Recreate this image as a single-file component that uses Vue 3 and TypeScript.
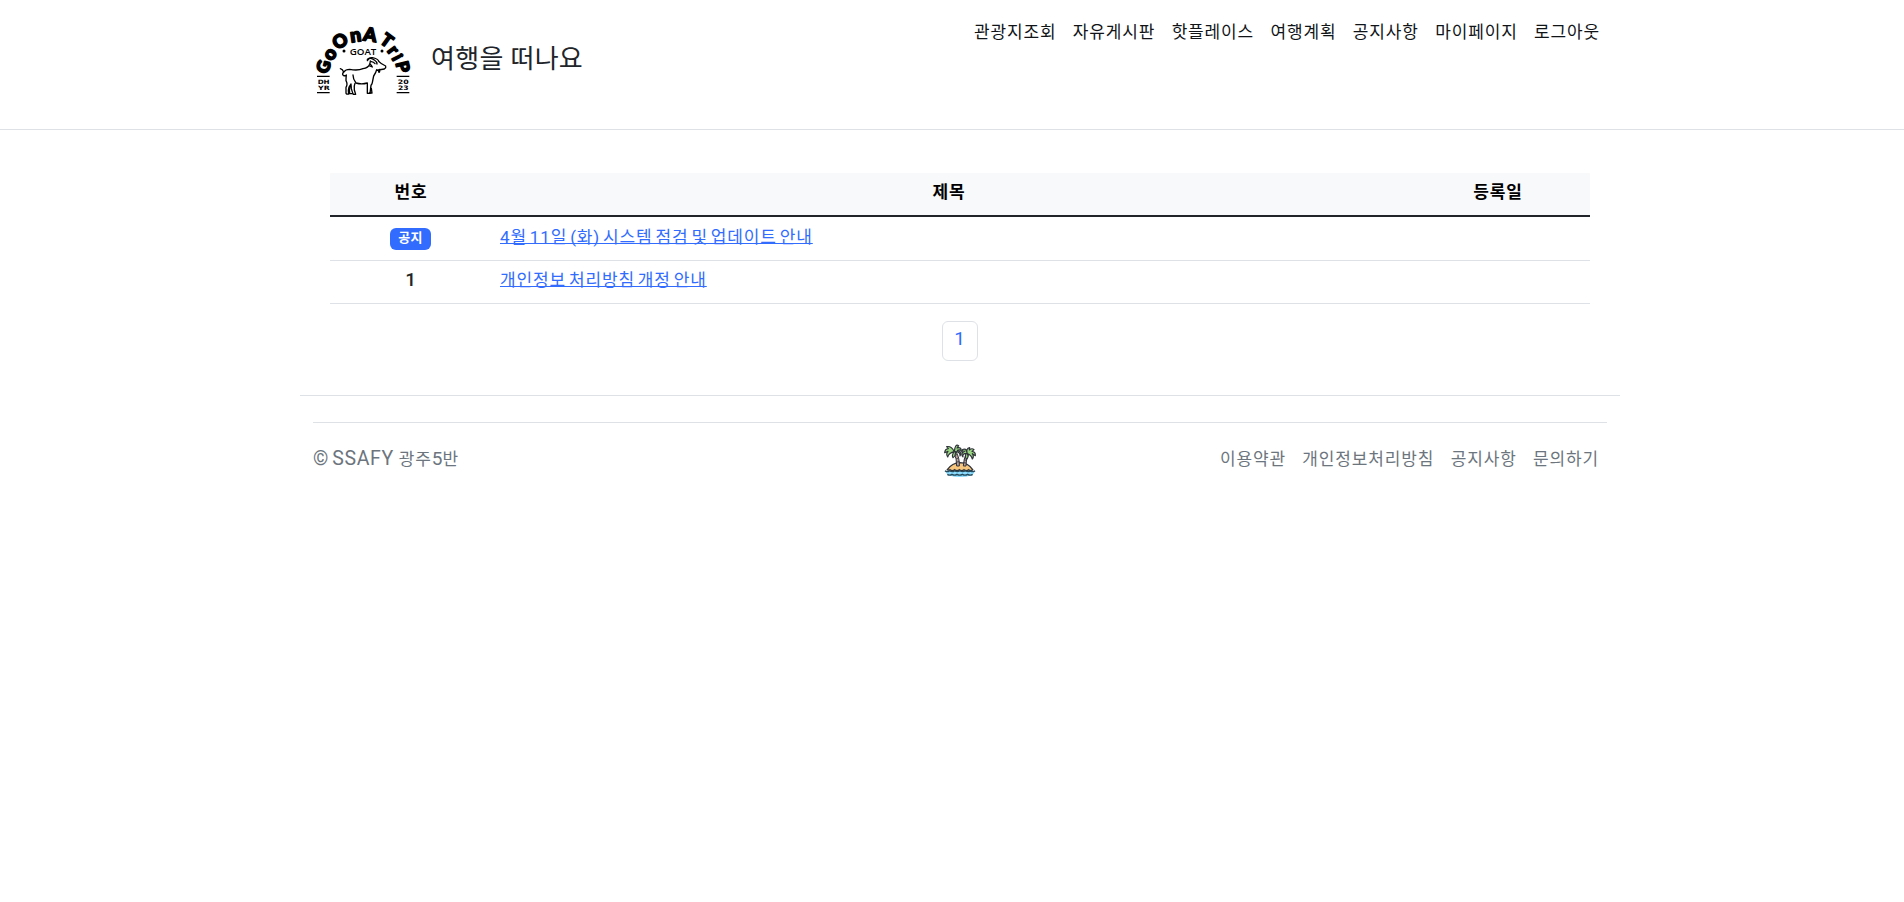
<script setup lang="ts">
interface Letter { ch: string; x: number; y: number; r: number; s: number }
interface Notice { id: number; label: string; pinned: boolean; title: string; date: string }

const menu: string[] = ['관광지조회', '자유게시판', '핫플레이스', '여행계획', '공지사항', '마이페이지', '로그아웃']
const footerLinks: string[] = ['이용약관', '개인정보처리방침', '공지사항', '문의하기']
const notices: Notice[] = [
  { id: 2, label: '공지', pinned: true, title: '4월 11일 (화) 시스템 점검 및 업데이트 안내', date: '' },
  { id: 1, label: '1', pinned: false, title: '개인정보 처리방침 개정 안내', date: '' },
]
const letters: Letter[] = [
  { ch: 'G', x: 72, y: 155, r: -76, s: 52 },
  { ch: 'o', x: 93, y: 119, r: -54, s: 56 },
  { ch: 'O', x: 121, y: 80, r: -32, s: 54 },
  { ch: 'n', x: 167, y: 66, r: -8, s: 58 },
  { ch: 'A', x: 210, y: 62, r: 8, s: 56 },
  { ch: 'T', x: 260, y: 77, r: 36, s: 52 },
  { ch: 'r', x: 277, y: 107, r: 52, s: 52 },
  { ch: 'i', x: 292, y: 127, r: 62, s: 46 },
  { ch: 'P', x: 307, y: 156, r: 76, s: 52 },
]
</script>

<template>
  <div class="page">
    <header class="header">
      <div class="header-inner">
        <a class="brand">
          <svg class="logo" viewBox="45 30 291 216" aria-label="GoOnATrip">
            <g class="arc">
              <text
                v-for="(l, i) in letters"
                :key="i"
                :transform="`translate(${l.x} ${l.y}) rotate(${l.r})`"
                :font-size="l.s"
                text-anchor="middle"
                :y="l.ch === 'n' || l.ch === 'o' || l.ch === 'r' ? 14 : 17"
              >{{ l.ch }}</text>
            </g>
            <text class="goat" x="189" y="119" text-anchor="middle" textLength="80" lengthAdjust="spacingAndGlyphs">GOAT</text>
            <circle cx="132" cy="108" r="4.5" />
            <circle cx="246" cy="108" r="4.5" />
            <g class="rule">
              <path d="M51 184H89M51 233H89M290 184H328M290 233H328" />
            </g>
            <g class="side">
              <text x="53" y="206" textLength="36" lengthAdjust="spacingAndGlyphs">DH</text>
              <text x="54" y="225" textLength="35" lengthAdjust="spacingAndGlyphs">YR</text>
              <text x="293" y="206" textLength="33" lengthAdjust="spacingAndGlyphs">20</text>
              <text x="294" y="225" textLength="32" lengthAdjust="spacingAndGlyphs">23</text>
            </g>
            <g class="goat-line">
              <path d="M121 161q7 2 10 10q6-8 18-8q24 5 40-2q16-2 20-13q2-6 2-10" />
              <path d="M131 171q-6 7-1 10q5 3 9-1q-1 8-1 17q6 11 0 20v18q0 3 8 2l-1-10q1-12 8-20l1 14q4 14 6 17h7l-4-13q-2-11 2-20" />
              <path d="M159 180q0 13 9 24q17 5 34 0v31h8l3-24q3-3 4-8q2-11 4-20q7-10 9-19q6 1 7 8q3-2 2-9" />
              <path d="M214 220l2 14h-8M151 214q-4 9-2 22h8" />
              <path d="M202 137q4-10 15-9q17 3 20 12q6 7 20 13q2 5-4 9q-9 2-18 3" />
              <path d="M202 133q11-7 21 2q8 5 8 12M214 140q7 1 11 6M211 148q3 3 6 8l-8-3" />
            </g>
          </svg>
          <span class="brand-name">여행을 떠나요</span>
        </a>
        <nav class="menu">
          <a v-for="m in menu" :key="m">{{ m }}</a>
        </nav>
      </div>
    </header>

    <main class="main">
      <table class="board">
        <colgroup>
          <col class="col-no" />
          <col />
          <col class="col-date" />
        </colgroup>
        <thead>
          <tr><th>번호</th><th>제목</th><th>등록일</th></tr>
        </thead>
        <tbody>
          <tr v-for="n in notices" :key="n.id">
            <td class="no">
              <span v-if="n.pinned" class="badge">{{ n.label }}</span>
              <template v-else>{{ n.label }}</template>
            </td>
            <td><a class="link">{{ n.title }}</a></td>
            <td>{{ n.date }}</td>
          </tr>
        </tbody>
      </table>
      <div class="pagination"><a class="page-link">1</a></div>
    </main>

    <div class="footer-wrap">
      <footer class="footer">
        <p class="copy"><span class="latin">© SSAFY</span> 광주<span class="digit">5</span>반</p>
        <svg class="island" viewBox="0 0 96 102">
          <path class="sea" d="M3 80q7 6 14 0q8 6 15 0q8 6 16 0q8 6 16 0q8 6 15 0q7 6 14 0q-4 19-45 19Q9 99 3 80Z" />
          <path class="sand" d="M10 77Q24 57 48 56q25 1 38 21q-6 6-12 0q-7 6-14 0q-7 6-14 0q-7 6-14 0q-7 6-14 0q-4 3-8 0Z" />
          <path class="trunk" d="M29 25l7-2q11 18 10 43h-8q1-22-9-41ZM67 28l7 3q-9 16-8 35h-8q1-22 9-38Z" />
          <path class="ring" d="M33 34l7-3M37 44l7-2M38 54l8-1M64 37l7 3M60 47l7 2M58 56l8 1" />
          <path class="leaf" d="M31 23Q22 5 8 8l5 6Q3 15 2 26l10-4Q5 29 11 39q4-13 20-16Q22 32 27 41q9-5 7-18q15 0 14 13q8-13-8-17q9-3 12 2q0-13-13-9l5-7Q33-2 31 23Z" />
          <path class="leaf" d="M70 29Q65 13 77 11l-1 7q8-7 14-1l-6 5q11 1 10 13l-9-6q6 9 0 16q-3-12-15-16q5 10-2 17q-7-8-1-18q-12 0-10 11q-9-11 5-17q-7-3-9 2q0-11 12-8Z" />
          <path class="wave" d="M3 80q7 6 14 0q8 6 15 0q8 6 16 0q8 6 16 0q8 6 15 0q7 6 14 0M10 91q7 5 14 0q8 5 15 0q8 5 16 0q8 5 16 0q8 5 15 0" />
        </svg>
        <nav class="footer-links">
          <a v-for="f in footerLinks" :key="f">{{ f }}</a>
        </nav>
      </footer>
    </div>
  </div>
</template>

<style>
body {
  margin: 0;
  background: #fff;
}
</style>

<style scoped>
* {
  box-sizing: border-box;
}
.page {
  font-family: Roboto, "Noto Sans CJK KR", "Noto Sans", sans-serif;
  font-size: 17px;
  letter-spacing: 0.85px;
  line-height: 26px;
  color: #212529;
}
.header {
  height: 130px;
  padding-left: 16px;
  border-bottom: 1px solid #dee2e6;
}
.header-inner {
  width: 1296px;
  margin: 0 auto;
  display: flex;
  justify-content: space-between;
  align-items: flex-start;
}
.brand {
  display: flex;
  align-items: center;
  padding: 25px 0 0 3px;
}
.logo {
  width: 97px;
  height: 72px;
  flex: none;
  overflow: visible;
}
.arc text {
  font-family: "Lato", "Open Sans", sans-serif;
  font-weight: 900;
  letter-spacing: 0;
  stroke: #000;
  stroke-width: 5;
  stroke-linejoin: round;
}
.goat {
  font-family: "Open Sans", sans-serif;
  font-weight: 600;
  font-size: 29px;
  letter-spacing: 0;
}
.side text {
  font-family: "DejaVu Sans", sans-serif;
  font-weight: 700;
  font-size: 18px;
  letter-spacing: 0;
}
.rule {
  stroke: #000;
  stroke-width: 3.5;
}
.goat-line {
  fill: none;
  stroke: #000;
  stroke-width: 4;
  stroke-linejoin: round;
  stroke-linecap: round;
}
.brand-name {
  margin: -5px 0 0 19px;
  font-size: 26px;
  letter-spacing: 0.3px;
  line-height: 36px;
}
.menu {
  display: flex;
  gap: 16.4px;
  padding: 19px 8px 0 0;
}
.menu a {
  color: #111417;
}
.main {
  width: 1260px;
  margin: 43px 0 0 330px;
}
.board {
  width: 100%;
  table-layout: fixed;
  border-collapse: separate;
  border-spacing: 0;
}
.col-no {
  width: 162px;
}
.col-date {
  width: 184px;
}
th {
  height: 44px;
  padding: 6px 8px 10px;
  background: #f8f9fb;
  border-bottom: 2px solid #212529;
  color: #000;
  font-weight: 700;
  line-height: 26px;
}
td {
  height: 43px;
  padding: 6px 8px 10px;
  border-bottom: 1px solid #dee2e6;
  line-height: 26px;
}
tbody tr:first-child td {
  height: 44px;
}
td.no {
  padding: 5px 8px 10px;
  text-align: center;
  font-size: 19px;
  font-weight: 500;
}
.badge {
  display: block;
  width: 41px;
  height: 22px;
  margin: 6px 0 0 52px;
  border-radius: 6px;
  background: #316cff;
  color: #fff;
  font-size: 13px;
  font-weight: 700;
  letter-spacing: 0.2px;
  line-height: 20px;
}
.link {
  color: #316cff;
  word-spacing: -2.1px;
  text-decoration: underline;
  text-decoration-thickness: 1px;
  text-underline-offset: 0;
  text-decoration-skip-ink: none;
}
.pagination {
  display: flex;
  justify-content: center;
  margin-top: 17px;
}
.page-link {
  width: 36px;
  height: 40px;
  border: 1px solid #dee2e6;
  border-radius: 6px;
  color: #316cff;
  font-size: 19px;
  text-align: center;
  line-height: 34px;
}
.footer-wrap {
  width: 1320px;
  margin: 34px 0 0 300px;
  padding: 26px 13px 0;
  border-top: 1px solid #dee2e6;
}
.footer {
  display: grid;
  grid-template-columns: 1fr 32px 1fr;
  align-items: start;
  border-top: 1px solid #dee2e6;
  color: #6c757d;
}
.copy {
  margin: 23px 0 0;
}
.latin {
  font-size: 19.5px;
  letter-spacing: 0.6px;
  word-spacing: -2px;
}
.digit {
  font-size: 19px;
  letter-spacing: 0;
}
.footer-links {
  display: flex;
  justify-content: flex-end;
  gap: 16.4px;
  padding: 23px 8px 0 0;
}
.island {
  width: 32px;
  height: 34px;
  margin-top: 21px;
}
.sea { fill: #8bdcff; }
.sand { fill: #f8c67c; stroke: #30333a; stroke-width: 4; }
.trunk { fill: #bda19b; stroke: #30333a; stroke-width: 3; }
.ring { stroke: #30333a; stroke-width: 2.5; }
.leaf { fill: #98d680; stroke: #30333a; stroke-width: 3.5; stroke-linejoin: round; }
.wave { fill: none; stroke: #254b5c; stroke-width: 4; }
</style>
